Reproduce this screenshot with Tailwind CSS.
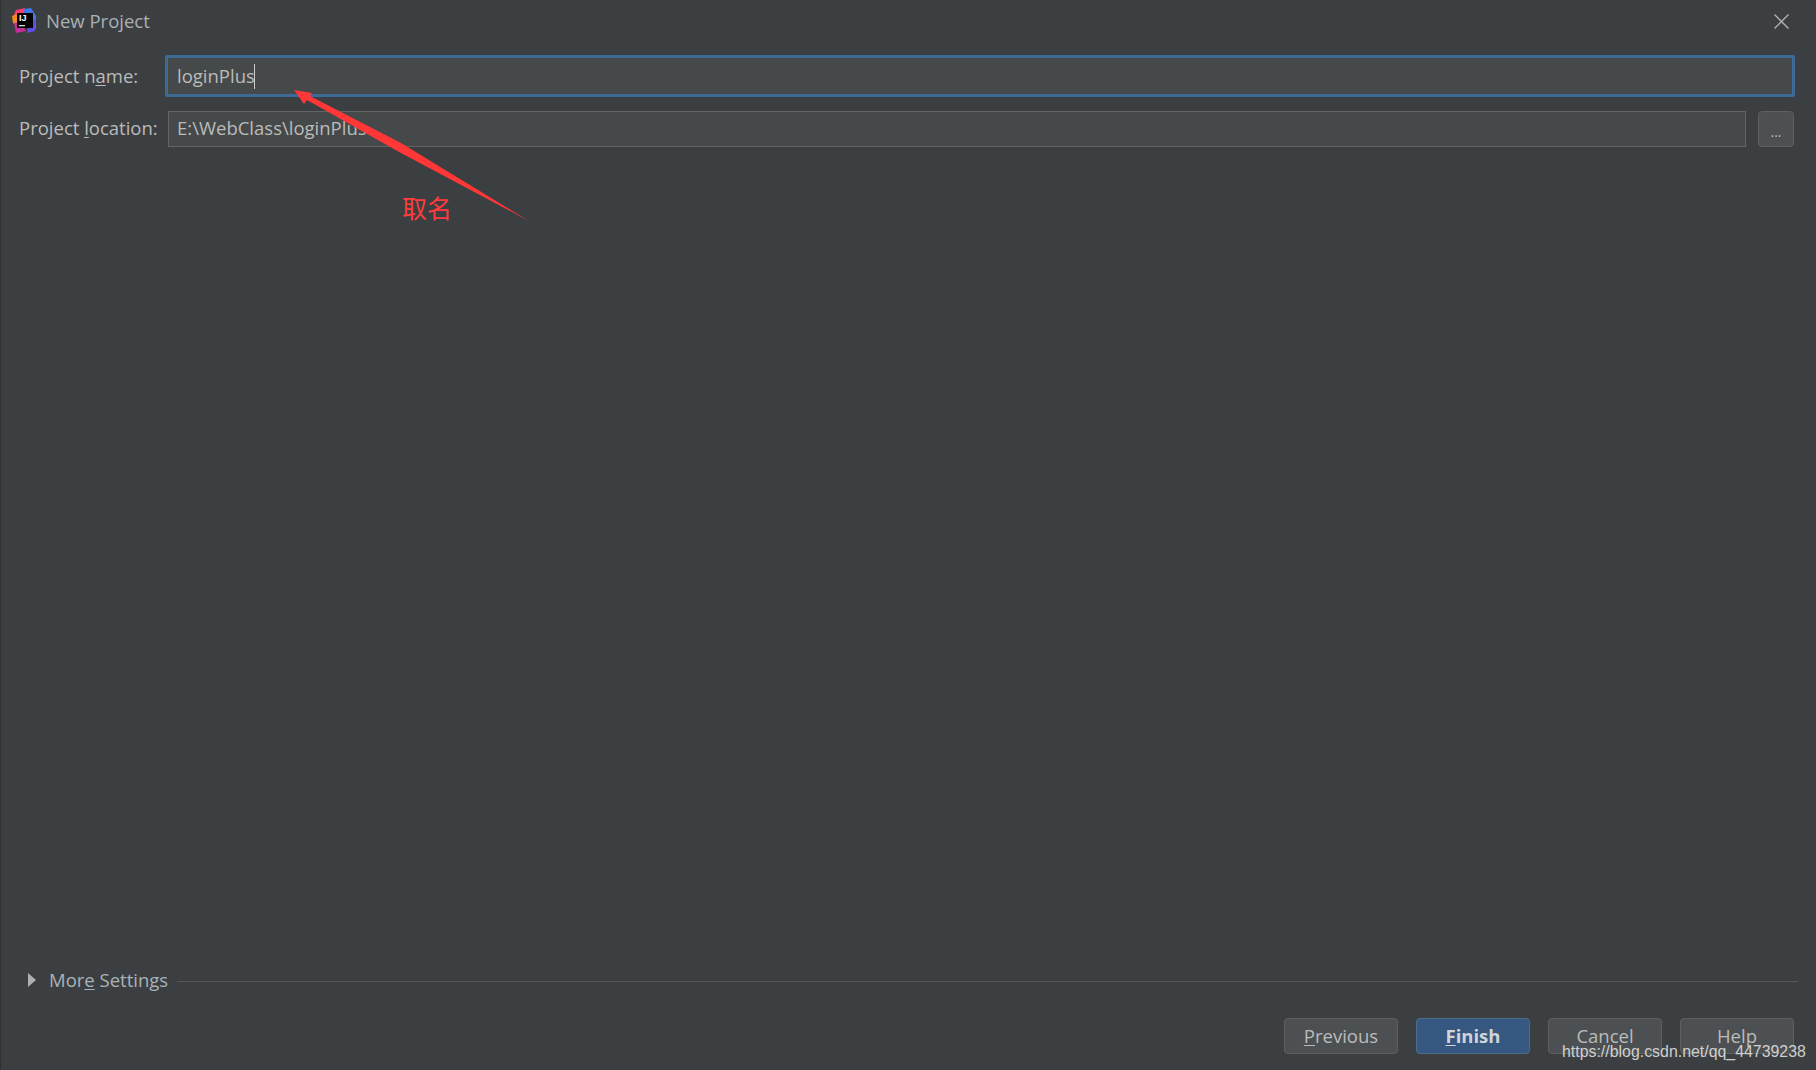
<!DOCTYPE html>
<html lang="en">
<head>
  <meta charset="UTF-8" />
  <title>New Project</title>
  <script src="https://cdn.jsdelivr.net/npm/@tailwindcss/browser@4"></script>
</head>
<body class="bg-[#3c3f41] overflow-hidden">
  <div class="relative flex flex-col h-[1070px] w-[1816px] border-l border-[#2f3133] text-[#bbbbbb] text-[18.5px] font-['Open_Sans','Noto_Sans',sans-serif]">

    <!-- Title bar -->
    <div class="flex items-center h-[42px] pl-[10px] pr-[27px] shrink-0">
      <svg class="w-[26px] h-[26px] shrink-0" viewBox="0 0 26 26">
        <polygon points="5,2 14,0 12,8 2,9" fill="#fb3a70" />
        <polygon points="13,1 20,0 25,8 25,21 14,12" fill="#3e7be8" />
        <polygon points="16,25 24,23 25,12 18,10" fill="#5b50e2" />
        <polygon points="1,8 6,6 7,18 2,15" fill="#f5891f" />
        <polygon points="3,15 9,14 15,23 5,25" fill="#c72e9a" />
        <rect x="6" y="5" width="16" height="15" fill="#000" />
        <rect x="8" y="17" width="6" height="1.3" fill="#ddd" />
        <text x="8" y="13" font-size="9" font-weight="700" font-family="Liberation Sans" fill="#fff">IJ</text>
      </svg>
      <span class="ml-[9px] text-[#a9b0b5]">New Project</span>
      <svg class="ml-auto w-[15px] h-[15px] text-[#b0b0b0]" viewBox="0 0 15 15" fill="none" stroke="currentColor" stroke-width="1.4">
        <path d="M.5.5l14 14M14.5.5l-14 14" />
      </svg>
    </div>

    <!-- Form -->
    <div class="flex items-center pl-[18px] pr-[19px] mt-[13px]">
      <label class="w-[146px] shrink-0 -mt-px">Project n<span class="underline underline-offset-2">a</span>me:</label>
      <div class="flex-1 mr-[2px] h-[42px] flex items-center pl-[9px] bg-[#45494a] border-[3px] border-[#3d6a99] rounded-[2px]">
        <span>loginPlus</span><span class="w-[1.5px] h-[25px] bg-[#cccccc] -ml-[1px]"></span>
      </div>
    </div>
    <div class="flex items-center pl-[18px] pr-[22px] mt-[14px]">
      <label class="w-[149px] shrink-0 -mt-[3px]">Project <span class="underline underline-offset-2">l</span>ocation:</label>
      <div class="flex-1 h-[36px] flex items-center pl-[8px] pb-[2px] bg-[#45494a] border border-[#646464]">E:\WebClass\loginPlus</div>
      <button class="ml-[12px] w-[36px] h-[36px] bg-[#4c5052] border border-[#5e6060] rounded-[4px] text-[14px] leading-[40px]">...</button>
    </div>

    <div class="flex-1"></div>

    <!-- More settings -->
    <div class="flex items-center pl-[27px] pr-[18px]">
      <svg class="w-[8px] h-[14px] text-[#aeb0b2]" viewBox="0 0 8 14"><polygon points="0,0 8,7 0,14" fill="currentColor" /></svg>
      <span class="ml-[13px] text-[#aab2b8]">Mor<span class="underline underline-offset-2">e</span> Settings</span>
      <div class="flex-1 ml-[9px] mt-[3px] h-px bg-[#53575a]"></div>
    </div>

    <!-- Buttons -->
    <div class="flex justify-end gap-[18px] pr-[22px] mt-[24px] mb-[16px]">
      <button class="w-[114px] h-[36px] bg-[#4c5052] border border-[#5e6060] rounded-[4px]"><span class="underline underline-offset-2">P</span>revious</button>
      <button class="w-[114px] h-[36px] bg-[#365880] border border-[#4c708c] rounded-[4px] font-bold text-[#d0d4d8]"><span class="underline underline-offset-2">F</span>inish</button>
      <button class="w-[114px] h-[36px] bg-[#4c5052] border border-[#5e6060] rounded-[4px]">Cancel</button>
      <button class="w-[114px] h-[36px] bg-[#4c5052] border border-[#5e6060] rounded-[4px]">Help</button>
    </div>

    <!-- Annotation arrow -->
    <svg class="absolute left-0 top-0 pointer-events-none" width="600" height="240">
      <polygon points="293,90 311,93 309,96 400,143 528,221 400,153 306,100 303,104" fill="#ff3737" />
    </svg>
    <span class="absolute left-[401px] top-[189px] text-[25px] text-[#ff3b3b] font-['Noto_Sans_CJK_SC',sans-serif]">取名</span>

    <!-- Watermark -->
    <span class="absolute left-[1561px] top-[1040px] text-[15.9px] text-[#d0d0d0] font-['Liberation_Sans',sans-serif]">https://blog.csdn.net/qq_44739238</span>
  </div>
</body>
</html>
